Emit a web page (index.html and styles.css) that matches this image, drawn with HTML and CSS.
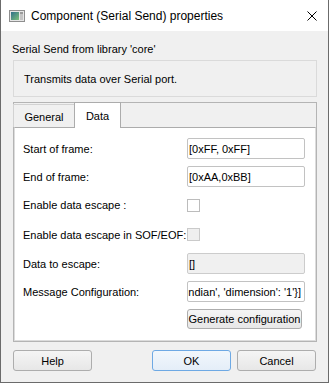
FILE: index.html
```html
<!DOCTYPE html>
<html>
<head>
<meta charset="utf-8">
<link rel="stylesheet" href="styles.css">
</head>
<body>
<div class="window">
  <div class="titlebar">
    <svg class="app-icon" width="16" height="12" viewBox="0 0 16 12">
      <defs>
        <linearGradient id="ig" x1="0" y1="0" x2="1" y2="1">
          <stop offset="0" stop-color="#2f6f8a"/>
          <stop offset="1" stop-color="#7cc07a"/>
        </linearGradient>
      </defs>
      <rect x="0.5" y="0.5" width="15" height="11" fill="#e6e6e6" stroke="#8e8e8e"/>
      <rect x="2" y="2" width="8" height="8" fill="url(#ig)"/>
      <rect x="11" y="2" width="3" height="8" fill="#c4c4c4"/>
      <rect x="11" y="2" width="3" height="2" fill="#9a9a9a"/>
    </svg>
    <span class="title">Component (Serial Send) properties</span>
    <svg class="close" width="10" height="10" viewBox="0 0 10 10">
      <path d="M0.5 0.5 L9.5 9.5 M9.5 0.5 L0.5 9.5" stroke="#000" stroke-width="1"/>
    </svg>
  </div>
  <div class="content">
    <div class="lib">Serial Send from library 'core'</div>
    <div class="desc">Transmits data over Serial port.</div>
    <div class="frame">
      <div class="tabs">
        <div class="tab">General</div>
        <div class="tab active">Data</div>
      </div>
      <div class="pane">
        <div class="form">
          <div class="label">Start of frame:</div>
          <div class="field">[0xFF, 0xFF]</div>
          <div class="label">End of frame:</div>
          <div class="field">[0xAA,0xBB]</div>
          <div class="label">Enable data escape :</div>
          <div class="cell"><div class="check"></div></div>
          <div class="label">Enable data escape in SOF/EOF:</div>
          <div class="cell"><div class="check disabled"></div></div>
          <div class="label">Data to escape:</div>
          <div class="field disabled">[]</div>
          <div class="label">Message Configuration:</div>
          <div class="field scrolled"><span class="cut"></span><span>ndian', 'dimension': '1'}]</span></div>
          <div class="label"></div>
          <div class="btn gen">Generate configuration</div>
        </div>
      </div>
    </div>
    <div class="buttons">
      <div class="btn dlg">Help</div>
      <div class="btn dlg ok">OK</div>
      <div class="btn dlg cancel">Cancel</div>
    </div>
  </div>
</div>
</body>
</html>
```
FILE: styles.css
```css
body {
  margin: 0;
  background: #ffffff;
}

.window {
  width: 329px;
  height: 383px;
  box-sizing: border-box;
  border: 1px solid #6b6b6b;
  border-top: none;
  background: #f0f0f0;
  display: flex;
  flex-direction: column;
  font-family: "Liberation Sans", Arial, sans-serif;
  font-size: 11px;
  color: #000;
}

.titlebar {
  height: 31px;
  flex: none;
  background: #ffffff;
  display: flex;
  align-items: center;
  padding: 0 11px 0 8px;
}

.app-icon {
  flex: none;
  margin-right: 6px;
  margin-top: 1px;
}

.title {
  flex: 1;
  font-size: 12px;
  white-space: nowrap;
}

.close {
  flex: none;
  margin-top: 1px;
}

.content {
  flex: 1;
  display: flex;
  flex-direction: column;
  padding: 12px 11px 11px 12px;
}

.lib {
  line-height: 13px;
  margin-left: -1px;
}

.desc {
  margin-top: 4px;
  height: 37px;
  box-sizing: border-box;
  border: 1px solid #dadada;
  padding-left: 10px;
  display: flex;
  align-items: center;
}

.frame {
  margin-top: 5px;
  height: 240px;
  box-sizing: border-box;
  border: 1px solid #b4b4b4;
  display: flex;
  flex-direction: column;
}

.tabs {
  height: 24px;
  flex: none;
  display: flex;
  align-items: flex-end;
}

.tab {
  box-sizing: border-box;
  height: 23px;
  border: 1px solid #d2d2d2;
  border-bottom: none;
  background: #f0f0f0;
  display: flex;
  align-items: center;
  justify-content: center;
  padding-top: 2px;
  width: 62px;
  margin-left: -1px;
}

.tab.active {
  width: 47px;
  height: 26px;
  margin-top: -1px;
  margin-bottom: -1px;
  padding-bottom: 1px;
  background: #ffffff;
  border-color: #acacac;
  position: relative;
  z-index: 1;
}

.pane {
  flex: 1;
  background: #ffffff;
  border: 1px solid #dcdcdc;
  border-top: 1px solid #acacac;
}

.form {
  display: grid;
  grid-template-columns: 1fr 118px;
  grid-template-rows: 21px 21px 22px 23px 21px 21px 20px;
  row-gap: 7px;
  padding: 10px 10px 0 8px;
}

.label {
  display: flex;
  align-items: center;
  white-space: nowrap;
}

.cell {
  display: flex;
  align-items: center;
}

.field {
  box-sizing: border-box;
  height: 21px;
  border: 1px solid #c2c2c2;
  border-radius: 2px;
  background: #ffffff;
  padding-left: 1px;
  display: flex;
  align-items: center;
  white-space: nowrap;
  overflow: hidden;
}

.field.disabled {
  background: #f0f0f0;
  border-color: #cccccc;
}

.field.scrolled {
  justify-content: flex-end;
  padding-right: 3px;
}

.field.scrolled .cut {
  width: 1px;
  height: 5px;
  background: #555;
  margin-top: 2px;
  margin-right: auto;
}

.check {
  width: 13px;
  height: 13px;
  box-sizing: border-box;
  border: 1px solid #bcbcbc;
  background: #ffffff;
}

.check.disabled {
  background: #efefef;
  border-color: #cacaca;
}

.btn {
  box-sizing: border-box;
  border: 1px solid #adadad;
  border-radius: 3px;
  background: linear-gradient(#f5f5f5, #e7e7e7);
  display: flex;
  align-items: center;
  justify-content: center;
  white-space: nowrap;
}

.btn.gen {
  width: 115px;
  height: 20px;
}

.buttons {
  margin-top: 8px;
  height: 21px;
  display: flex;
  padding-right: 1px;
}

.btn.dlg {
  width: 79px;
  height: 21px;
}

.btn.ok {
  margin-left: auto;
  margin-right: 6px;
  border-color: #6ea9e4;
  background: linear-gradient(#f2f7fc, #e4eef8);
}
```
